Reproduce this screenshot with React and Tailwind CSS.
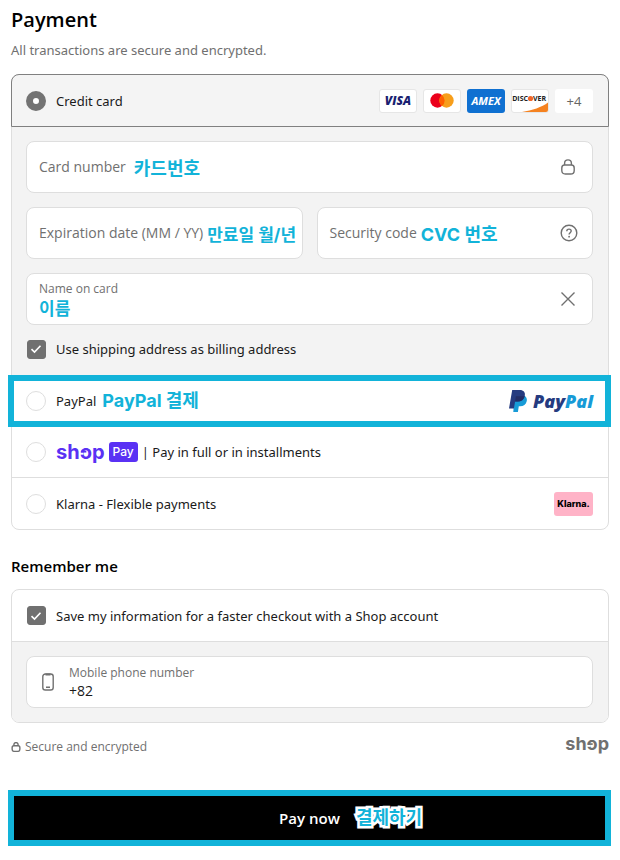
import React, { useState } from "react";

const Note = ({ children, className = "text-lg" }) => (
  <span
    className={`font-['Inter','Noto_Sans_CJK_KR',sans-serif] leading-5 font-bold whitespace-nowrap text-[#12b3d9] ${className}`}
  >
    {children}
  </span>
);

const Radio = ({ id, checked, onChange }) => (
  <input
    type="radio"
    name="payment"
    id={id}
    checked={checked}
    onChange={onChange}
    className="size-5 shrink-0 appearance-none rounded-full border border-[#dedede] bg-white checked:border-[7px] checked:border-[#737373]"
  />
);

const CheckBox = ({ id, checked, onChange }) => (
  <span className="grid size-5 shrink-0 place-items-center">
    <input
      type="checkbox"
      id={id}
      checked={checked}
      onChange={onChange}
      className="col-start-1 row-start-1 size-[19px] appearance-none rounded-[3px] border border-[#dedede] bg-white checked:border-[#707070] checked:bg-[#707070]"
    />
    {checked && (
      <svg
        viewBox="0 0 12 12"
        className="pointer-events-none col-start-1 row-start-1 size-3"
        fill="none"
        stroke="white"
        strokeWidth="1.6"
      >
        <path d="M1.5 6.2 4.5 9.1 10.5 2.8" />
      </svg>
    )}
  </span>
);

const LockIcon = ({ className, strokeWidth = 1.4 }) => (
  <svg viewBox="0 0 16 16" className={className} fill="none" stroke="#707070" strokeWidth={strokeWidth}>
    <path d="M4.6 6h6.8c2 0 2.8 1.2 2.8 3v2.4c0 2.4-1.2 3.6-3.6 3.6H5.4c-2.4 0-3.6-1.2-3.6-3.6V9c0-1.8.8-3 2.8-3Z" />
    <path d="M4.6 6V4.4C4.6 2.4 6 .9 8 .9s3.4 1.5 3.4 3.5V6" />
  </svg>
);

const HelpIcon = () => (
  <svg viewBox="0 0 18 18" className="size-[18px]" fill="none" stroke="#707070" strokeWidth="1.4">
    <circle cx="9" cy="9" r="7.8" />
    <path d="M6.8 7.2c0-1.3 1-2.1 2.2-2.1s2.2.8 2.2 2c0 1.5-2.1 1.7-2.1 3.3" />
    <circle cx="9.1" cy="12.7" r=".9" fill="#707070" stroke="none" />
  </svg>
);

// The "o" of the Shop wordmark is open on its left side, with a short bar inside
const ShopWord = ({ className }) => (
  <span className={`font-['Inter',sans-serif] leading-5 font-bold ${className}`}>
    sh
    <span className="relative inline-block">
      o
      <svg viewBox="0 0 12 12" className="absolute inset-x-0 bottom-1 w-full" aria-hidden="true">
        <path d="M0 6.3h3.4v2.2H0Z" fill="white" />
        <path d="M1 4.6h5.2v1.8H1Z" fill="currentColor" />
      </svg>
    </span>
    p
  </span>
);

const CardBadges = () => (
  <div className="flex items-center gap-1.5 font-['Open_Sans',sans-serif]">
    <span className="flex h-6 w-[38px] items-center justify-center rounded-[3px] border border-[#e6e6e6] bg-white text-xs font-extrabold text-[#1a1f71] italic">
      VISA
    </span>
    <span className="flex h-6 w-[38px] items-center justify-center rounded-[3px] border border-[#e6e6e6] bg-white">
      <svg viewBox="0 0 24 15" className="h-[15px] w-6">
        <circle cx="7.5" cy="7.5" r="7.2" fill="#eb001b" />
        <circle cx="16.5" cy="7.5" r="7.2" fill="#f79e1b" />
        <path d="M12 1.9a7.2 7.2 0 0 1 0 11.2 7.2 7.2 0 0 1 0-11.2Z" fill="#ff5f00" />
      </svg>
    </span>
    <span className="flex h-6 w-[38px] items-center justify-center rounded-[3px] bg-[#0f70d1] text-[11px] font-bold text-white italic">
      AMEX
    </span>
    <span className="flex h-6 w-[38px] overflow-hidden rounded-[3px] border border-[#e6e6e6] bg-white">
      <svg viewBox="0 0 36 22" className="h-[22px] w-9">
        <path d="M36 12.5V22H10C20 20.5 30 17 36 12.5Z" fill="#f58220" />
        <circle cx="18.5" cy="8.5" r="2.6" fill="#f1662a" />
        <g fontSize="7" fontWeight="700" fontFamily="'Open Sans', sans-serif" fill="#222">
          <text x="16" y="11" textAnchor="end">DISC</text>
          <text x="21" y="11">VER</text>
        </g>
      </svg>
    </span>
    <span className="flex h-6 w-[38px] items-center justify-center rounded-[3px] bg-white text-[13px] text-[#666]">
      +4
    </span>
  </div>
);

const PayPalLogo = () => (
  <span className="flex items-center gap-1.5">
    <svg viewBox="0 0 18 22" className="h-[22px] w-[18px]">
      <path d="M5.6 5.5h8.2c3.2.4 4.6 2.6 3.9 5.7-.8 3.5-3.1 5-6.5 5H9.8L8.9 22H4.3Z" fill="#179bd7" />
      <path d="M3.2 0h7.6c3.7 0 5.7 2.2 5 5.8-.8 4-3.4 5.8-7.4 5.8H6.1L4.9 18.5H0Z" fill="#253b80" />
      <path d="M6.9 6.3h8.8c-.9 3.6-3.5 5.3-7.3 5.3H6.1Z" fill="#222d65" />
    </svg>
    <span className="font-['Open_Sans',sans-serif] text-lg leading-6 font-extrabold text-[#253b80] italic">
      Pay<span className="text-[#179bd7]">Pal</span>
    </span>
  </span>
);

const fieldClass =
  "flex h-[52px] items-center rounded-lg border border-[#dedede] bg-white px-3 font-['Open_Sans','Noto_Sans_CJK_KR',sans-serif]";
const labelClass = "whitespace-nowrap text-sm leading-5 text-[#707070]";
const smallLabelClass = "text-xs leading-4 text-[#707070]";
const inputClass = "w-0 min-w-0 flex-1 bg-transparent outline-none";
const rowClass = "flex items-center gap-2.5 pr-[15px] pl-3.5";

const App = () => {
  const [method, setMethod] = useState("card");
  const [sameAddress, setSameAddress] = useState(true);
  const [saveInfo, setSaveInfo] = useState(true);
  const [name, setName] = useState("");
  const [phone, setPhone] = useState("+82");

  return (
    <main className="min-h-screen bg-white pt-1.5 pr-[9px] pb-3.5 pl-2 font-['Noto_Sans','Noto_Sans_CJK_KR',sans-serif] text-[13px] leading-5 text-[#1a1a1a]">
      <div className="pr-0.5 pl-[3px]">
        {/* Payment Section */}
        <section>
          <h1 className="font-['Open_Sans',sans-serif] text-xl leading-7 font-semibold text-black">Payment</h1>
          <p className="mt-1.5 text-[#707070]">All transactions are secure and encrypted.</p>

          <div className="mt-3.5 rounded-lg border border-[#dedede]">
            <div className={`${rowClass} -mx-px -mt-px h-[53px] rounded-t-lg border border-[#808080] bg-[#f4f4f4]`}>
              <Radio id="card" checked={method === "card"} onChange={() => setMethod("card")} />
              <label htmlFor="card" className="flex-1">Credit card</label>
              <CardBadges />
            </div>

            <div className="flex flex-col gap-3.5 bg-[#f3f3f3] pt-3.5 pr-[15px] pb-4 pl-3.5">
              <div className={fieldClass}>
                <label htmlFor="number" className={labelClass}>Card number</label>
                <Note className="mt-1 ml-2 text-lg">카드번호</Note>
                <input id="number" className={inputClass} />
                <LockIcon className="mr-1 size-4" />
              </div>

              <div className="grid grid-cols-2 gap-3.5">
                <div className={fieldClass}>
                  <label htmlFor="expiry" className={labelClass}>Expiration date (MM / YY)</label>
                  <Note className="mt-1 ml-1 text-[17px]">만료일 월/년</Note>
                  <input id="expiry" className={inputClass} />
                </div>
                <div className={fieldClass}>
                  <label htmlFor="cvc" className={labelClass}>Security code</label>
                  <Note className="mt-1 ml-1 text-lg">CVC 번호</Note>
                  <input id="cvc" className={inputClass} />
                  <button type="button" aria-label="Help" className="mr-0.5">
                    <HelpIcon />
                  </button>
                </div>
              </div>

              <div className={fieldClass}>
                <div className="flex flex-1 flex-col pt-0.5">
                  <label htmlFor="name" className={smallLabelClass}>Name on card</label>
                  <div className="flex">
                    <Note className="mt-0.5 text-[17px]">이름</Note>
                    <input
                      id="name"
                      className={inputClass}
                      value={name}
                      onChange={(e) => setName(e.target.value)}
                    />
                  </div>
                </div>
                <button type="button" aria-label="Clear name" className="mr-1" onClick={() => setName("")}>
                  <svg viewBox="0 0 16 16" className="size-4" stroke="#707070" strokeWidth="1.4">
                    <path d="M1.5 1.5l13 13M14.5 1.5l-13 13" />
                  </svg>
                </button>
              </div>

              <div className="flex items-center gap-2.5">
                <CheckBox id="same" checked={sameAddress} onChange={() => setSameAddress(!sameAddress)} />
                <label htmlFor="same">Use shipping address as billing address</label>
              </div>
            </div>

            <div className="-mr-[3px] -ml-1 flex h-[52px] items-center gap-2.5 border-6 border-[#12b3d9] bg-white px-3">
              <Radio id="paypal" checked={method === "paypal"} onChange={() => setMethod("paypal")} />
              <label htmlFor="paypal" className="flex flex-1 items-center gap-1.5">
                PayPal <Note>PayPal 결제</Note>
              </label>
              <PayPalLogo />
            </div>

            <div className={`${rowClass} h-[50px]`}>
              <Radio id="shop" checked={method === "shop"} onChange={() => setMethod("shop")} />
              <label htmlFor="shop" className="flex items-center">
                <ShopWord className="text-xl text-[#5a31f4]" />
                <span className="mr-1 ml-1 rounded-[3px] bg-[#5a31f4] px-1 font-['Inter',sans-serif] text-xs leading-5 font-medium text-white">
                  Pay
                </span>
                | Pay in full or in installments
              </label>
            </div>

            <div className={`${rowClass} h-[52px] border-t border-[#dedede]`}>
              <Radio id="klarna" checked={method === "klarna"} onChange={() => setMethod("klarna")} />
              <label htmlFor="klarna" className="flex-1">Klarna - Flexible payments</label>
              <span className="flex h-6 w-[39px] items-center justify-center rounded-[3px] bg-[#ffb3c7] font-['Inter',sans-serif] text-[9px] font-extrabold text-black">
                Klarna.
              </span>
            </div>
          </div>
        </section>

        {/* Remember Me Section */}
        <section className="mt-[26px]">
          <h2 className="font-['Open_Sans',sans-serif] text-[15px] leading-5 font-semibold text-black">Remember me</h2>
          <div className="mt-[13px] overflow-hidden rounded-lg border border-[#dedede]">
            <div className={`${rowClass} h-[51px]`}>
              <CheckBox id="save" checked={saveInfo} onChange={() => setSaveInfo(!saveInfo)} />
              <label htmlFor="save">Save my information for a faster checkout with a Shop account</label>
            </div>
            <div className="border-t border-[#dedede] bg-[#f3f3f3] pt-3.5 pr-[15px] pb-3.5 pl-3.5">
              <div className={`${fieldClass} gap-3`}>
                <svg viewBox="0 0 18 18" className="size-[18px]" fill="none" stroke="#707070" strokeWidth="1.4">
                  <rect x="3.8" y="1" width="10.4" height="16" rx="2.6" />
                  <path d="M7 14.2h4" />
                  <path d="M6.5 1.5h5" strokeWidth="2" />
                </svg>
                <div className="flex flex-1 flex-col pt-0.5">
                  <label htmlFor="phone" className={smallLabelClass}>Mobile phone number</label>
                  <input
                    id="phone"
                    type="tel"
                    className="w-full bg-transparent text-sm leading-5 outline-none"
                    value={phone}
                    onChange={(e) => setPhone(e.target.value)}
                  />
                </div>
              </div>
            </div>
          </div>

          <div className="mt-2.5 flex items-center justify-between font-['Open_Sans',sans-serif] text-xs text-[#707070]">
            <span className="flex items-center gap-1 pt-1.5">
              <LockIcon className="size-2.5" strokeWidth={2.2} />
              Secure and encrypted
            </span>
            <ShopWord className="text-lg" />
          </div>
        </section>
      </div>

      <button
        type="button"
        className="mt-[35px] flex h-14 w-full items-center justify-center border-6 border-[#12b3d9] bg-black font-['Open_Sans',sans-serif] text-[15px] font-semibold text-white"
      >
        <span className="relative">
          Pay now
          <Note className="absolute top-0 left-full ml-4 text-lg [-webkit-text-stroke:5px_white] [paint-order:stroke_fill]">
            결제하기
          </Note>
        </span>
      </button>
    </main>
  );
};

export default App;
